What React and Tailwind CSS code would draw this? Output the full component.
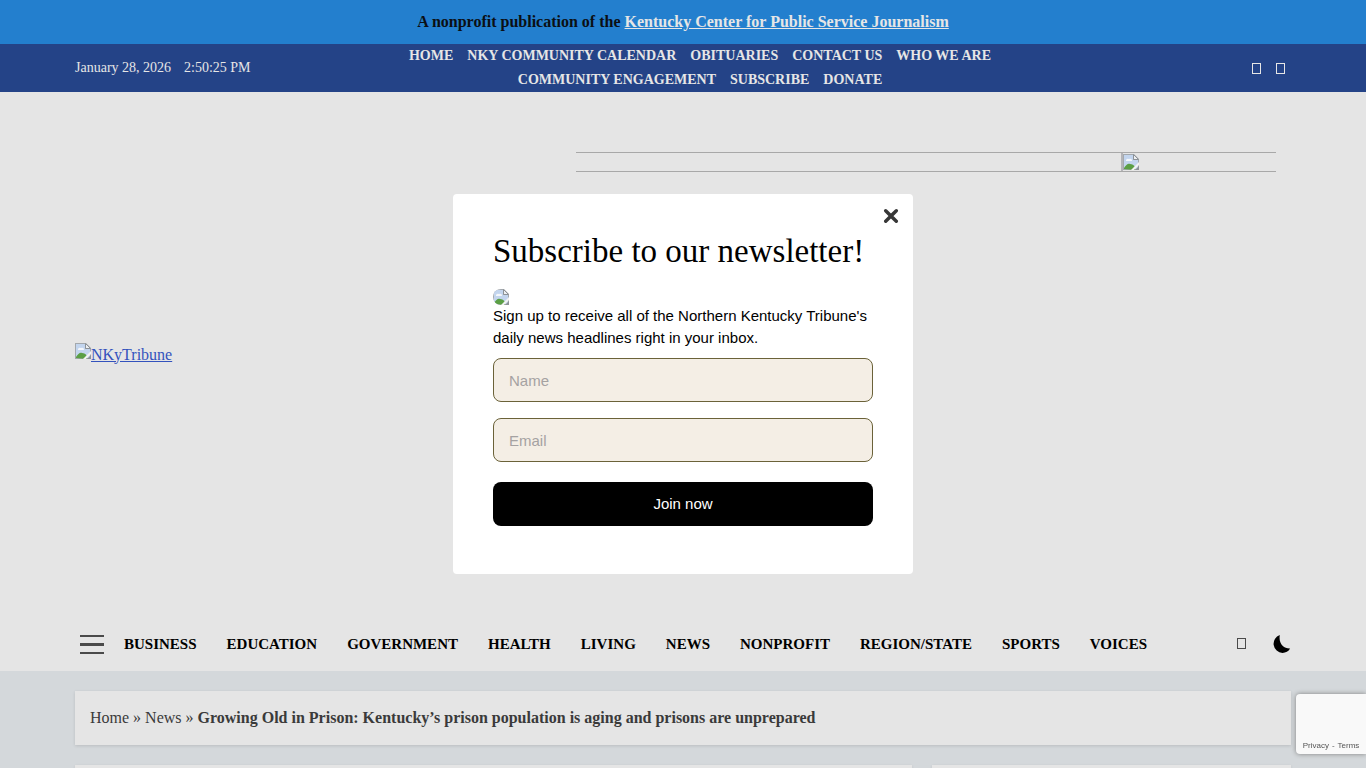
import React from 'react';

const topLinks = [
  'Home',
  'NKY Community Calendar',
  'Obituaries',
  'Contact Us',
  'Who We Are',
  'Community Engagement',
  'Subscribe',
  'Donate',
];

const sections = [
  'Business',
  'Education',
  'Government',
  'Health',
  'Living',
  'News',
  'Nonprofit',
  'Region/State',
  'Sports',
  'Voices',
];

function BrokenImage({ className = '' }) {
  return (
    <svg viewBox="0 0 16 16" className={`size-4 shrink-0 ${className}`} aria-hidden="true">
      <path d="M0 0h11l5 5v11H0z" fill="#a3a8ad" />
      <path d="M1 1h9v5h5v9H1z" fill="#c3d5ee" />
      <path d="M3 7a2 2 0 0 1 3-2 2 2 0 0 1 3 2z" fill="#f4f7fb" />
      <path d="M1 15v-1c2-3 4-5 6-4 2 0 4 1 5 3v3z" fill="#5b9f45" />
      <path d="M10.500 .5v5h5z" fill="#eef0f2" stroke="#8d9297" strokeWidth="1" />
      <path d="M8 16l8-8v3l-5 5z" fill="#f2f2f2" />
      <path d="M12 16l4-4v4z" fill="#8d9297" />
    </svg>
  );
}

function GlyphBox({ className = '' }) {
  return <span className={`block h-[11px] w-[9px] border ${className}`} />;
}

function TopBar() {
  return (
    <div className="bg-[#244387] text-[#e6e6e6]">
      <div className="mx-auto grid max-w-[1216px] grid-cols-[321fr_608fr_287fr] items-center text-sm leading-6">
        <div className="flex gap-[13px]">
          <span>January 28, 2026</span>
          <span>2:50:25 PM</span>
        </div>
        <nav aria-label="Site">
          <ul className="flex flex-wrap justify-center gap-x-[14px] font-bold uppercase">
            {topLinks.map((t) => (
              <li key={t}>
                <a href="#">{t}</a>
              </li>
            ))}
          </ul>
        </nav>
        <div className="flex justify-end gap-[15px] pr-1.5">
          <a href="#" aria-label="Facebook"><GlyphBox className="border-[#e6e6e6]" /></a>
          <a href="#" aria-label="Twitter"><GlyphBox className="border-[#e6e6e6]" /></a>
        </div>
      </div>
    </div>
  );
}

function Newsletter() {
  const field =
    'block h-11 w-full rounded-lg border border-[#6b6239] bg-[#f4eee5] px-[15px] text-[15px] text-black placeholder:text-[#a5a2a2] placeholder:opacity-100';
  return (
    <div className="fixed inset-0 flex items-center justify-center">
      <div
        role="dialog"
        aria-labelledby="newsletter-title"
        className="relative w-[460px] rounded bg-white px-10 pt-9 pb-12 font-['Liberation_Sans',Arial,sans-serif] text-[15px] text-black"
      >
        <button type="button" aria-label="Close" className="absolute top-[14px] right-[14px]">
          <svg viewBox="0 0 16 16" className="size-4" fill="none" stroke="#373737" strokeWidth="3.4" strokeLinecap="round">
            <path d="M2.7 2.7l10.6 10.6M13.3 2.7L2.7 13.3" />
          </svg>
        </button>
        <h2
          id="newsletter-title"
          className="font-['Palatino_Linotype',Palatino,'Liberation_Serif',serif] text-[33px] leading-[42px] whitespace-nowrap"
        >
          Subscribe to our newsletter!
        </h2>
        <BrokenImage className="mt-[17px] rounded-tl-lg rounded-bl-lg" />
        <p className="leading-[22px]">
          Sign up to receive all of the Northern Kentucky Tribune's daily news headlines right in your inbox.
        </p>
        <form className="mt-[9px]" onSubmit={(e) => e.preventDefault()}>
          <input aria-label="Name" type="text" placeholder="Name" className={field} />
          <input aria-label="Email" type="email" placeholder="Email" className={`mt-4 ${field}`} />
          <button type="submit" className="mt-5 block h-11 w-full rounded-lg bg-black text-white">
            Join now
          </button>
        </form>
      </div>
    </div>
  );
}

export default function App() {
  return (
    <div className="flex min-h-screen flex-col bg-[#d4d8db] font-['Liberation_Serif','Times_New_Roman',serif]">
      <div className="bg-[#237fce] py-[10px] text-center text-base leading-6 font-bold text-[#0b0f14]">
        A nonprofit publication of the{' '}
        <a href="#" className="text-[#e6e6e6] underline">
          Kentucky Center for Public Service Journalism
        </a>
      </div>
      <TopBar />

      <header className="bg-[#e5e5e5]">
        <div className="mx-auto max-w-[1216px]">
          <div className="flex min-h-[525px] justify-between py-[60px]">
            <a href="#" className="flex items-center self-center text-base leading-6 text-[#3352bd] underline">
              <BrokenImage className="mb-2" />
              NKyTribune
            </a>
            <div className="mr-[15px] flex h-5 w-[700px] justify-end border-y border-[#a8a8a8]">
              <div className="w-[155px] border-l-2 border-[#b4b4b8]">
                <BrokenImage className="mt-px" />
              </div>
            </div>
          </div>
          <div className="flex h-[54px] items-center pl-[5px]">
            <button type="button" aria-label="Menu" className="mr-5 flex w-6 flex-col gap-[6px]">
              <span className="h-0.5 bg-[#4a4a4a]" />
              <span className="h-[3px] bg-[#4a4a4a]" />
              <span className="h-0.5 bg-[#4a4a4a]" />
            </button>
            <nav aria-label="Sections">
              <ul className="flex gap-[30px] text-[15px] leading-6 font-bold text-black uppercase">
                {sections.map((s) => (
                  <li key={s}>
                    <a href="#">{s}</a>
                  </li>
                ))}
              </ul>
            </nav>
            <div className="ml-auto flex items-center gap-[27px] pb-px">
              <button type="button" aria-label="Search"><GlyphBox className="border-[#4a4a4a]" /></button>
              <button type="button" aria-label="Dark mode">
                <svg viewBox="0 0 18 18" className="size-[18px]">
                  <path d="M6.800 0A9.200 9.200 0 0 0 9.500 17.900c3.200 0 6-1.500 7.600-4.400C11 13.800 5.300 8.600 6.800 0z" fill="#000" />
                </svg>
              </button>
            </div>
          </div>
        </div>
      </header>

      <main className="mx-auto flex w-full max-w-[1216px] flex-1 flex-col gap-5 pt-5">
        <nav
          aria-label="Breadcrumb"
          className="bg-[#e5e5e5] p-[15px] text-base leading-6 text-[#3a3a3a] shadow-[0_1px_3px_rgba(0,0,0,0.12)]"
        >
          <a href="#">Home</a> » <a href="#">News</a> »{' '}
          <strong>Growing Old in Prison: Kentucky’s prison population is aging and prisons are unprepared</strong>
        </nav>
        <div className="flex flex-1 gap-5">
          <article className="flex-[837] bg-[#e5e5e5] shadow-[0_1px_3px_rgba(0,0,0,0.12)]" />
          <aside className="flex-[359] bg-[#e5e5e5] shadow-[0_1px_3px_rgba(0,0,0,0.12)]" />
        </div>
      </main>

      <Newsletter />

      <div className="fixed right-0 bottom-[14px] flex h-[60px] w-[70px] items-end justify-center rounded-l-sm bg-[#f9f9f9] pb-1 font-['Liberation_Sans',Arial,sans-serif] text-[8px] leading-[9px] whitespace-nowrap text-[#555555] shadow-[0_0_5px_#808080]">
        <span className="flex gap-[3px]">
          <a href="#">Privacy</a>
          <span>-</span>
          <a href="#">Terms</a>
        </span>
      </div>
    </div>
  );
}
